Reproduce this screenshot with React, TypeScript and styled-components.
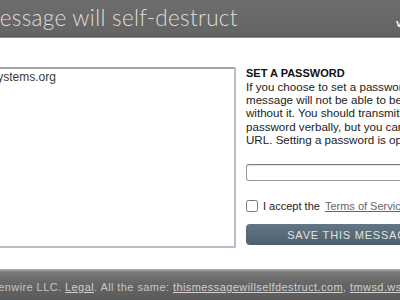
import React, { useState } from 'react';
import styled, { createGlobalStyle } from 'styled-components';

const GlobalStyle = createGlobalStyle`
  html, body {
    margin: 0;
    padding: 0;
    background: #ffffff;
    overflow: hidden;
    font-family: "Liberation Sans", Arial, sans-serif;
  }
`;

const Page = styled.div`
  display: flex;
  flex-direction: column;
  width: 560px;
  height: 300px;
  margin-left: -70px;
`;

const Header = styled.header`
  display: flex;
  align-items: center;
  justify-content: space-between;
  height: 37px;
  padding: 0 0 0 4px;
  background: linear-gradient(#6d6d6d, #656565 85%, #5c5c5c);
  border-bottom: 1px solid #8a8a8a;
`;

const Title = styled.h1`
  margin: -2px 0 0 0;
  font-family: Lato, "Open Sans", sans-serif;
  font-weight: 300;
  font-size: 22.5px;
  letter-spacing: 0.3px;
  color: #dedede;
  white-space: nowrap;
`;

const NavLink = styled.a`
  margin-left: auto;
  width: 94px;
  font-size: 11px;
  font-weight: bold;
  color: #f4f4f4;
  text-decoration: none;
  margin-top: 8px;
`;

const Main = styled.main`
  flex: 1;
  display: flex;
  gap: 10px;
  padding: 29px 0 0 4px;
`;

const MessageBox = styled.textarea`
  box-sizing: border-box;
  width: 302px;
  height: 181px;
  padding: 1px 3px;
  border: 2px solid #b9bdcb;
  border-top-color: #a4a6ac;
  border-radius: 2px;
  font-family: "Liberation Sans", Arial, sans-serif;
  font-size: 12px;
  color: #3a3a3a;
  resize: none;
  outline: none;
  caret-color: #222;
`;

const Side = styled.section`
  display: flex;
  flex-direction: column;
  width: 220px;
`;

const Heading = styled.h2`
  margin: 0;
  font-size: 11px;
  line-height: 13px;
  font-weight: bold;
  color: #111;
`;

const Info = styled.p`
  margin: 0;
  font-size: 11.6px;
  line-height: 13.2px;
  color: #222;
  white-space: nowrap;
`;

const PasswordInput = styled.input`
  box-sizing: border-box;
  margin-top: 18px;
  width: 100%;
  height: 17px;
  border: 1px solid #9a9a9a;
  border-top-color: #7c7c7c;
  border-radius: 3px;
  box-shadow: inset 0 1px 1px rgba(0, 0, 0, 0.12);
`;

const AcceptRow = styled.label`
  display: flex;
  align-items: center;
  gap: 5px;
  margin-top: 19px;
  font-size: 11px;
  color: #222;
  white-space: nowrap;

  input {
    margin: 0;
    width: 12px;
    height: 12px;
  }
`;

const TermsLink = styled.a`
  color: #666;
  text-decoration: underline;
`;

const SaveButton = styled.button`
  margin-top: 12px;
  height: 21px;
  width: 210px;
  border: none;
  border-radius: 4px;
  background: linear-gradient(#627685, #4e606d);
  color: #e2e2e2;
  font-family: "Liberation Sans", Arial, sans-serif;
  font-size: 11px;
  letter-spacing: 0.8px;
  cursor: pointer;
`;

const Footer = styled.footer`
  display: flex;
  align-items: center;
  height: 31px;
  padding: 5px 0 0 7px;
  background: linear-gradient(#b0b0b0 0, #7a7a7a 3px, #686868 40%, #5a5a5a);
  color: #c4c4c4;
  font-size: 11px;
  letter-spacing: 0.42px;
  white-space: nowrap;
  box-sizing: border-box;

  a {
    color: #d0d0d0;
    text-decoration: underline;
  }
`;

const App: React.FC = () => {
  const [message, setMessage] = useState('al@greensystems.org');
  const [password, setPassword] = useState('');
  const [accepted, setAccepted] = useState(false);

  return (
    <>
      <GlobalStyle />
      <Page>
        <Header>
          <Title>This message will self-destruct</Title>
          <NavLink href="#">view</NavLink>
        </Header>
        <Main>
          <MessageBox value={message} onChange={(e) => setMessage(e.target.value)} />
          <Side>
            <Heading>SET A PASSWORD</Heading>
            <Info>
              If you choose to set a password, the
              <br />
              message will not be able to be read
              <br />
              without it. You should transmit the
              <br />
              password verbally, but you can include it in the
              <br />
              URL. Setting a password is optional.
            </Info>
            <PasswordInput
              type="password"
              value={password}
              onChange={(e) => setPassword(e.target.value)}
            />
            <AcceptRow>
              <input
                type="checkbox"
                checked={accepted}
                onChange={() => setAccepted((prev) => !prev)}
              />
              I accept the <TermsLink href="#">Terms of Service</TermsLink>
            </AcceptRow>
            <SaveButton>SAVE THIS MESSAGE</SaveButton>
          </Side>
        </Main>
        <Footer>
          © 2010 Greenwire LLC.&nbsp;<a href="#">Legal</a>. All the same:&nbsp;
          <a href="#">thismessagewillselfdestruct.com</a>,&nbsp;<a href="#">tmwsd.ws</a>
        </Footer>
      </Page>
    </>
  );
};

export default App;
